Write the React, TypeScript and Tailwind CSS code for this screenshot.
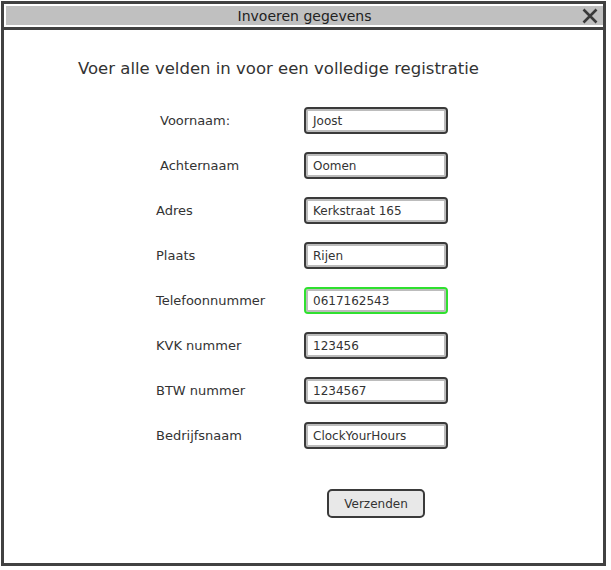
import React from "react";

const fields = [
  { label: "Voornaam:", value: "Joost", indent: "pl-1" },
  { label: "Achternaam", value: "Oomen", indent: "pl-1" },
  { label: "Adres", value: "Kerkstraat 165", indent: "" },
  { label: "Plaats", value: "Rijen", indent: "" },
  { label: "Telefoonnummer", value: "0617162543", indent: "", active: true },
  { label: "KVK nummer", value: "123456", indent: "" },
  { label: "BTW nummer", value: "1234567", indent: "" },
  { label: "Bedrijfsnaam", value: "ClockYourHours", indent: "" },
];

export default function App() {
  return (
    <div
      className="w-[611px] h-[570px] bg-white text-[#333]"
      style={{ fontFamily: '"Comic Sans MS", "DejaVu Sans", sans-serif' }}
    >
      <div className="ml-[1px] mt-[1px] w-[605px] h-[565px] border-[3px] border-[#414141] flex flex-col">
        {/* title bar */}
        <div className="p-[2px] pr-0 border-b-[3px] border-[#414141]">
          <div className="relative h-[19px] bg-[#c0c0c0] flex items-center justify-center">
            <span className="text-[14px] leading-none text-[#222]">Invoeren gegevens</span>
            <svg
              className="absolute right-[5px] top-[2px]"
              width="16"
              height="16"
              viewBox="0 0 16 16"
            >
              <path d="M1.5 1.5 L14.5 14.5 M14.5 1.5 L1.5 14.5" stroke="#3a3a3a" strokeWidth="2.6" />
            </svg>
          </div>
        </div>

        {/* content */}
        <div className="flex-1 pt-[28px]">
          <h1 className="pl-[74px] text-[16.5px] leading-[22px] font-normal">
            Voer alle velden in voor een volledige registratie
          </h1>

          <div className="mt-[27px] pl-[152px] grid grid-cols-[148px_144px] gap-y-[18px]">
            {fields.map((f) => (
              <React.Fragment key={f.label}>
                <div className={`flex items-center text-[13px] ${f.indent}`}>{f.label}</div>
                <div
                  className={`h-[27px] rounded-[4px] border-2 bg-white flex items-center pl-[7px] text-[12px] shadow-[inset_0_0_0_2px_#bcbcbc] ${
                    f.active ? "border-[#2fe02f]" : "border-[#3a3a3a]"
                  }`}
                >
                  {f.value}
                </div>
              </React.Fragment>
            ))}
            <div className="col-start-2 flex justify-center mt-[22px]">
              <button className="w-[98px] h-[29px] rounded-[5px] border-2 border-[#3a3a3a] bg-[#e8e8e8] text-[12px] text-[#333]">
                Verzenden
              </button>
            </div>
          </div>
        </div>
      </div>
    </div>
  );
}
